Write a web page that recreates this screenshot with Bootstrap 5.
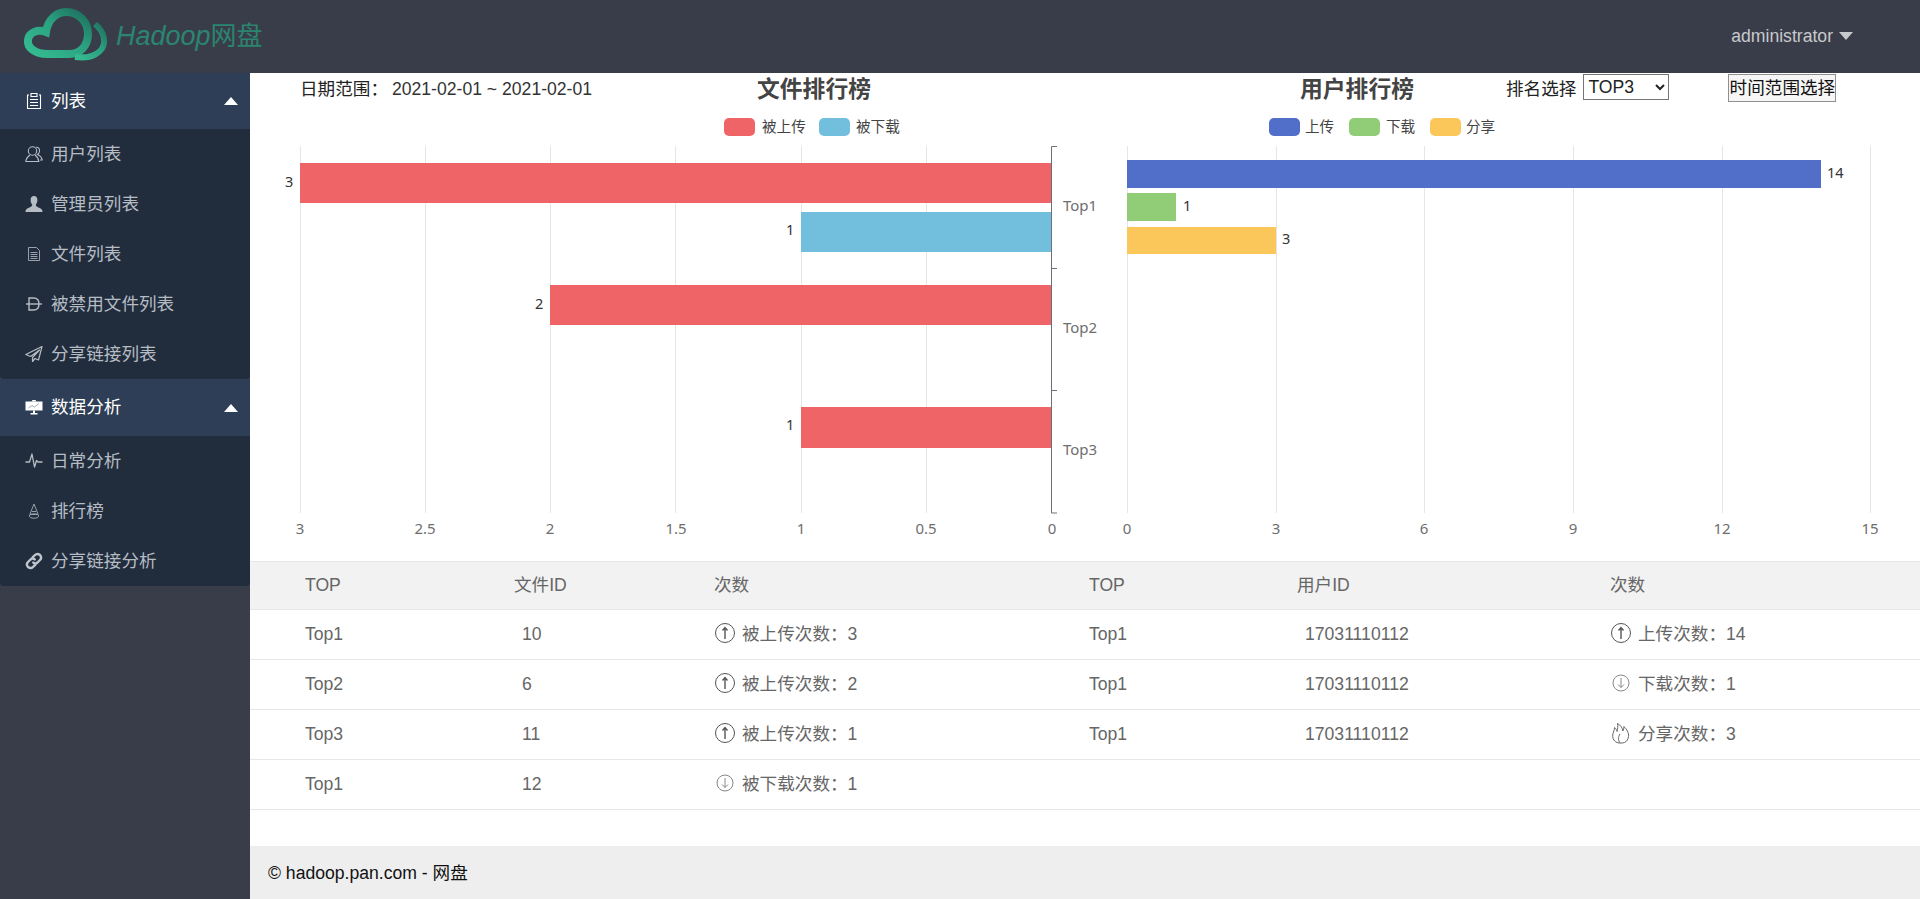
<!DOCTYPE html>
<html lang="zh-CN">
<head>
  <meta charset="UTF-8" />
  <meta name="viewport" content="width=device-width, initial-scale=1.0"/>
  <title>Hadoop网盘</title>
  <link href="https://cdn.jsdelivr.net/npm/bootstrap@5.3.0/dist/css/bootstrap.min.css" rel="stylesheet"/>
  <style>
    html, body { height: 100%; }
    body { background: #393d49; font-family: "Liberation Sans", "Noto Sans CJK SC", sans-serif; font-size: 17.6px; overflow: hidden; }
    .top-bar { height: 73px; background: #393d49; padding: 0; }
    .brand-box { width: 250px; height: 73px; padding-left: 20px; }
    .brand-box svg { flex: none; }
    .brand-name { font-size: 26px; color: #2b8570; line-height: 73px; }
    .brand-name i { font-size: 27px; }
    .user-menu { color: #c8c9cc; margin-right: 67px; }
    .caret-down { width: 0; height: 0; border: 7px solid transparent; border-top: 8px solid #c8c9cc; border-bottom: 0; margin-left: 6px; }
    .side-box { width: 250px; flex: none; }
    .side-head { height: 56px; background: #2d3e56; color: #fff; padding: 0 12px 0 25px; }
    .side-head.tall { height: 57px; }
    .side-sub { background: #212d3d; border-radius: 0 0 4px 4px; }
    .side-sub .nav-link { height: 50px; padding: 0 0 0 25px; color: #b6bcc4; display: flex; align-items: center; }
    .side-ico { width: 18px; height: 18px; margin-right: 8px; flex: none; }
    .caret-up { width: 0; height: 0; border: 7.5px solid transparent; border-bottom: 8px solid #fff; border-top: 0; }
    .main-pane { background: #fff; min-width: 0; }
    .pane-left { width: 850px; }
    .pane-right { width: 820px; }
    .pane-head { height: 33px; color: #222; }
    .date-box { width: 507px; padding-left: 50px; }
    .date-box b { font-weight: 400; margin-left: 4px; color: #333; }
    .chart-title { font-size: 22.8px; font-weight: 700; color: #444; line-height: 33px; width: 114px; white-space: nowrap; }
    .title-gap { margin-left: 200px; }
    .rank-label { margin-left: 92px; }
    .rank-select { align-self: flex-start; width: 86px; height: 26px; margin: 1px 0 0 7px; border: 1px solid #767676; background: #fff; color: #222; font-family: inherit; font-size: 17.6px; border-radius: 0; }
    .time-btn { align-self: flex-start; width: 108px; height: 28px; margin: 1px 0 0 59px; padding: 0; border: 1px solid #8f8f8f; background: #f6f6f6; color: #111; font-size: 17.6px; line-height: 26px; white-space: nowrap; }
    .chart-svg { display: block; }
    .chart-svg text { font-family: "Noto Sans", "Noto Sans CJK SC", sans-serif; font-size: 14px; }
    .chart-svg .lg { font-family: "Noto Sans CJK SC", sans-serif; font-size: 14.6px; fill: #444; }
    .chart-svg .ax { fill: #6e6e6e; text-anchor: middle; font-size: 15px; }
    .chart-svg .val { fill: #333; font-size: 14.5px; }
    .rank-table { table-layout: fixed; width: 1670px; margin: 0; font-size: 17.6px; color: #666; border-top: 1px solid #e6e6e6; }
    .rank-table th { background: #f2f2f2; font-weight: 400; height: 48px; padding: 0 0 0 15px; color: #666; vertical-align: middle; border-bottom: 1px solid #e6e6e6; }
    .rank-table td { height: 50px; padding: 0 0 0 15px; color: #666; vertical-align: middle; border-bottom: 1px solid #e6e6e6; }
    .rank-table .first-col { padding-left: 55px; }
    .rank-table .id-col { padding-left: 23px; }
    .rank-table tr > :last-child { border-right: 1px solid #e6e6e6; }
    .count-ico { width: 22px; height: 22px; margin-right: 6px; vertical-align: -4px; }
    .page-foot { height: 53px; background: #eee; color: #111; padding: 2px 0 0 18px; }
  </style>
</head>
<body class="d-flex flex-column">
  <nav class="navbar top-bar flex-nowrap">
    <div class="brand-box d-flex align-items-center">
      <svg width="96" height="73" viewBox="20 0 96 73">
        <defs>
          <linearGradient id="cloudGrad" x1="0" y1="1" x2="1" y2="0">
            <stop offset="0" stop-color="#35bd92"/>
            <stop offset="0.6" stop-color="#2a9f7e"/>
            <stop offset="1" stop-color="#1d6d5c"/>
          </linearGradient>
        </defs>
        <path d="M48 54C34 54 27 47 28 40C29 32 38 29 46 32C48 19 57 12 66 12C79 12 88 22 88 34C88 45 81 54 69 54Z" fill="none" stroke="url(#cloudGrad)" stroke-width="8"/>
        <path d="M95 24C105 32 107 44 100 51C93 58 84 58 75 57" fill="none" stroke="url(#cloudGrad)" stroke-width="6"/>
      </svg>
      <span class="brand-name text-nowrap"><i>Hadoop</i>网盘</span>
    </div>
    <div class="user-menu d-flex align-items-center">administrator<span class="caret-down"></span></div>
  </nav>

  <div class="d-flex flex-grow-1" style="min-height:0">
    <aside class="side-box">
      <div class="side-head d-flex align-items-center justify-content-between">
        <span class="d-flex align-items-center">
          <svg class="side-ico" viewBox="0 0 18 18" fill="none" stroke="#fff" stroke-width="1.1"><path d="M4 3H2.5V16.5H15.5V3H14"/><path d="M6 1.5H12V4.5H6Z"/><path d="M5 7.5H13M5 10.5H13M5 13.5H13"/></svg>
          <span>列表</span>
        </span>
        <span class="caret-up"></span>
      </div>
      <div class="side-sub nav flex-column">
        <a class="nav-link" href="#"><svg class="side-ico" viewBox="0 0 18 18" fill="none" stroke="#b6bcc4" stroke-width="1.1"><circle cx="7.5" cy="6" r="4.2"/><path d="M5 10C3 11.5 1 13 .8 16.5H13.8C13.6 13 12 11.5 10 10"/><path d="M11 2.2C13.5 2 15 4 14.5 6.5C14.2 8 13.4 9 12.5 9.5C14.5 10.5 17 12 17.2 15H15"/></svg>用户列表</a>
        <a class="nav-link" href="#"><svg class="side-ico" viewBox="0 0 18 18" fill="#b6bcc4"><path d="M9 1C6.6 1 5.4 3 5.6 5.5C5.8 7.5 6.6 9 7.2 9.8C7.4 11 6.4 11.8 4.5 12.4C2 13.2.6 14 .4 17H17.6C17.4 14 16 13.2 13.5 12.4C11.6 11.8 10.6 11 10.8 9.8C11.4 9 12.2 7.5 12.4 5.5C12.6 3 11.4 1 9 1Z"/></svg>管理员列表</a>
        <a class="nav-link" href="#"><svg class="side-ico" viewBox="0 0 18 18" fill="none" stroke="#9aa1aa" stroke-width="1"><path d="M3.5 2.5H11.5L14.5 5.5V15.5H3.5Z"/><path d="M5.5 7.5H12.5M5.5 9.5H12.5M5.5 11.5H12.5M5.5 13.5H12.5"/></svg>文件列表</a>
        <a class="nav-link" href="#"><svg class="side-ico" viewBox="0 0 18 18" fill="none" stroke="#b6bcc4" stroke-width="1.4"><path d="M4 3H8.5C12 3 14 5.5 14 9C14 12.5 12 15 8.5 15H4Z"/><path d="M1 9H17"/></svg>被禁用文件列表</a>
        <a class="nav-link" href="#"><svg class="side-ico" viewBox="0 0 18 18" fill="none" stroke="#b6bcc4" stroke-width="1.2" stroke-linejoin="round"><path d="M17 1.5L.8 9.5L5.5 11.5L14.5 5L7.5 12.5V16.5L10 13.5L13.5 15Z"/></svg>分享链接列表</a>
      </div>
      <div class="side-head tall d-flex align-items-center justify-content-between">
        <span class="d-flex align-items-center">
          <svg class="side-ico" viewBox="0 0 18 18" fill="#fff"><path d="M.5 3.5H17.5V12.5H.5Z"/><path d="M6.5 3.5L7.5 2H10.5L11.5 3.5ZM8 12.5H10V15H12.5V16.5H5.5V15H8Z"/><path d="M3.5 10L7 7.5L9.5 9L14 5.5" fill="none" stroke="#8b97a6" stroke-width=".8"/></svg>
          <span>数据分析</span>
        </span>
        <span class="caret-up"></span>
      </div>
      <div class="side-sub nav flex-column">
        <a class="nav-link" href="#"><svg class="side-ico" viewBox="0 0 18 18" fill="none" stroke="#b6bcc4" stroke-width="1.3" stroke-linejoin="round"><path d="M.5 10H4.5L7 2L9.5 15L11.5 8.5L13 10H17.5"/></svg>日常分析</a>
        <a class="nav-link" href="#"><svg class="side-ico" viewBox="0 0 18 18" fill="none" stroke="#9aa1aa" stroke-width="1"><path d="M9 2L4.8 12.5H13.2Z"/><path d="M7 9.5H11"/><ellipse cx="9" cy="14" rx="4.5" ry="2.2"/></svg>排行榜</a>
        <a class="nav-link" href="#"><svg class="side-ico" viewBox="0 0 18 18" fill="none" stroke="#c0c5cc" stroke-width="2.4" stroke-linecap="round"><path d="M7.8 5.2L10 3C11.3 1.7 13.4 1.7 15 3C16.3 4.6 16.3 6.7 15 8L12.5 10.5C11.2 11.7 9.5 11.7 8.3 10.6"/><path d="M10.2 12.8L8 15C6.7 16.3 4.6 16.3 3 15C1.7 13.4 1.7 11.3 3 10L5.5 7.5C6.8 6.3 8.5 6.3 9.7 7.4"/></svg>分享链接分析</a>
      </div>
    </aside>

    <main class="main-pane flex-grow-1 d-flex flex-column">
      <div class="d-flex">
        <section class="pane-left">
          <div class="pane-head d-flex align-items-center">
            <span class="date-box">日期范围&#xFF1A;<b>2021-02-01 ~ 2021-02-01</b></span>
            <span class="chart-title">文件排行榜</span>
          </div>
          <svg class="chart-svg" width="850" height="455" viewBox="250 106 850 455">
            <path d="M300.5 146V513M425.5 146V513M550.5 146V513M675.5 146V513M801.5 146V513M926.5 146V513" stroke="#e6e6e6"/>
            <rect x="724" y="118" width="31" height="18" rx="5" fill="#ef6567"/>
            <text class="lg" x="762" y="132">被上传</text>
            <rect x="819" y="118" width="31" height="18" rx="5" fill="#71bedd"/>
            <text class="lg" x="856" y="132">被下载</text>
            <rect x="300" y="163" width="752" height="40" fill="#ef6567"/>
            <rect x="801" y="212" width="251" height="40" fill="#71bedd"/>
            <rect x="550" y="285" width="502" height="40" fill="#ef6567"/>
            <rect x="801" y="407" width="251" height="41" fill="#ef6567"/>
            <path d="M1057 146.5H1051.5V513H1057M1051 268.5H1057M1051 390.5H1057" fill="none" stroke="#6e7079"/>
            <text class="val" x="285" y="187">3</text>
            <text class="val" x="786" y="235">1</text>
            <text class="val" x="535" y="309">2</text>
            <text class="val" x="786" y="430">1</text>
            <text class="ax" x="1080" y="211">Top1</text>
            <text class="ax" x="1080" y="333">Top2</text>
            <text class="ax" x="1080" y="455">Top3</text>
            <text class="ax" x="300" y="534">3</text>
            <text class="ax" x="425" y="534">2.5</text>
            <text class="ax" x="550" y="534">2</text>
            <text class="ax" x="676" y="534">1.5</text>
            <text class="ax" x="801" y="534">1</text>
            <text class="ax" x="926" y="534">0.5</text>
            <text class="ax" x="1052" y="534">0</text>
          </svg>
        </section>
        <section class="pane-right">
          <div class="pane-head d-flex align-items-center">
            <span class="chart-title title-gap">用户排行榜</span>
            <span class="rank-label text-nowrap">排名选择</span>
            <select class="rank-select"><option>TOP3</option><option>TOP5</option></select>
            <button class="time-btn" type="button">时间范围选择</button>
          </div>
          <svg class="chart-svg" width="820" height="455" viewBox="1100 106 820 455">
            <path d="M1127.5 146V513M1276.5 146V513M1424.5 146V513M1573.5 146V513M1722.5 146V513M1870.5 146V513" stroke="#e6e6e6"/>
            <rect x="1269" y="118" width="31" height="18" rx="5" fill="#516fc8"/>
            <text class="lg" x="1305" y="132">上传</text>
            <rect x="1349" y="118" width="31" height="18" rx="5" fill="#91cd77"/>
            <text class="lg" x="1386" y="132">下载</text>
            <rect x="1430" y="118" width="31" height="18" rx="5" fill="#fbc75a"/>
            <text class="lg" x="1466" y="132">分享</text>
            <rect x="1127" y="160" width="694" height="28" fill="#516fc8"/>
            <rect x="1127" y="193" width="49" height="28" fill="#91cd77"/>
            <rect x="1127" y="227" width="149" height="27" fill="#fbc75a"/>
            <text class="val" x="1827" y="178">14</text>
            <text class="val" x="1183" y="211">1</text>
            <text class="val" x="1282" y="244">3</text>
            <text class="ax" x="1127" y="534">0</text>
            <text class="ax" x="1276" y="534">3</text>
            <text class="ax" x="1424" y="534">6</text>
            <text class="ax" x="1573" y="534">9</text>
            <text class="ax" x="1722" y="534">12</text>
            <text class="ax" x="1870" y="534">15</text>
          </svg>
        </section>
      </div>

      <table class="table rank-table">
        <colgroup><col style="width:249px"><col style="width:200px"><col style="width:375px"><col style="width:208px"><col style="width:313px"><col style="width:325px"></colgroup>
        <thead>
          <tr><th class="first-col">TOP</th><th>文件ID</th><th>次数</th><th>TOP</th><th>用户ID</th><th>次数</th></tr>
        </thead>
        <tbody>
          <tr>
            <td class="first-col">Top1</td><td class="id-col">10</td>
            <td><svg class="count-ico" viewBox="0 0 22 22" fill="none" stroke="#555"><circle cx="11" cy="11" r="9.5"/><path d="M11 17V6M8.5 8.5L11 5.5L13.5 8.5" stroke-width="1.4"/></svg>被上传次数&#xFF1A;3</td>
            <td>Top1</td><td class="id-col">17031110112</td>
            <td><svg class="count-ico" viewBox="0 0 22 22" fill="none" stroke="#555"><circle cx="11" cy="11" r="9.5"/><path d="M11 17V6M8.5 8.5L11 5.5L13.5 8.5" stroke-width="1.4"/></svg>上传次数&#xFF1A;14</td>
          </tr>
          <tr>
            <td class="first-col">Top2</td><td class="id-col">6</td>
            <td><svg class="count-ico" viewBox="0 0 22 22" fill="none" stroke="#555"><circle cx="11" cy="11" r="9.5"/><path d="M11 17V6M8.5 8.5L11 5.5L13.5 8.5" stroke-width="1.4"/></svg>被上传次数&#xFF1A;2</td>
            <td>Top1</td><td class="id-col">17031110112</td>
            <td><svg class="count-ico" viewBox="0 0 22 22" fill="none" stroke="#888"><circle cx="11" cy="11" r="8"/><path d="M11 6V15.5M8 12.5L11 15.5L14 12.5"/></svg>下载次数&#xFF1A;1</td>
          </tr>
          <tr>
            <td class="first-col">Top3</td><td class="id-col">11</td>
            <td><svg class="count-ico" viewBox="0 0 22 22" fill="none" stroke="#555"><circle cx="11" cy="11" r="9.5"/><path d="M11 17V6M8.5 8.5L11 5.5L13.5 8.5" stroke-width="1.4"/></svg>被上传次数&#xFF1A;1</td>
            <td>Top1</td><td class="id-col">17031110112</td>
            <td><svg class="count-ico" viewBox="0 0 22 22" fill="none" stroke="#666"><path d="M7 20.5C3.5 19 2 15.5 3 11.5C3.5 9.5 4.5 8 4.5 5.5C6 6.5 6.8 8 7 9.5C7.8 7 8 4 7.5 1.5C10.5 3 12.5 6 12.8 9C13.6 8 14 6.5 13.8 4.5C16.8 7 19 11 18.5 14.5C18.2 17 17 19.5 14.5 20.5"/><path d="M7 20.5C9.5 21.3 12 21.3 14.5 20.5M10 20.8C8 18.5 8 15 10 12"/></svg>分享次数&#xFF1A;3</td>
          </tr>
          <tr>
            <td class="first-col">Top1</td><td class="id-col">12</td>
            <td><svg class="count-ico" viewBox="0 0 22 22" fill="none" stroke="#888"><circle cx="11" cy="11" r="8"/><path d="M11 6V15.5M8 12.5L11 15.5L14 12.5"/></svg>被下载次数&#xFF1A;1</td>
            <td></td><td></td><td></td>
          </tr>
        </tbody>
      </table>

      <footer class="page-foot mt-auto d-flex align-items-center">© hadoop.pan.com - 网盘</footer>
    </main>
  </div>
</body>
</html>
